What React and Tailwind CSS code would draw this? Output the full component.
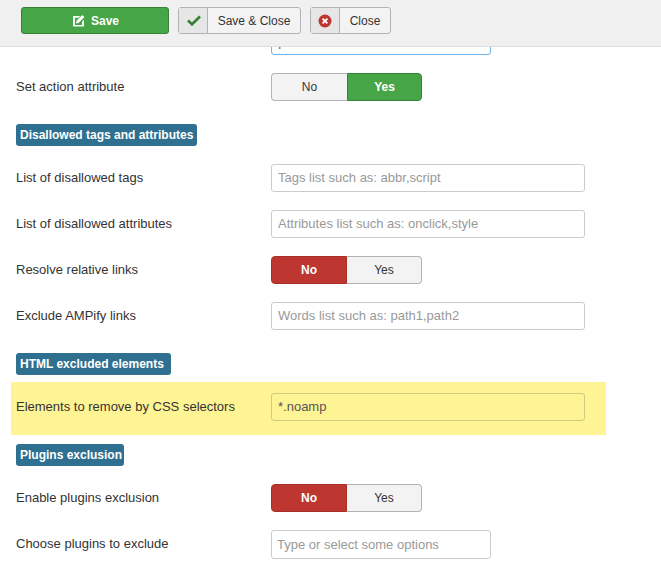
const font = "font-['Liberation_Sans',Arial,sans-serif]";

function Toggle({ value }) {
  const no = value === "no";
  return (
    <div className="flex h-[28px] w-[151px] text-[12px]">
      <div className={`flex w-[76px] items-center justify-center rounded-l-[4px] border ${no ? "border-[#a9302a] bg-[#bd362f] font-bold text-white" : "border-[#b3b3b3] border-r-0 bg-[#f3f3f3] text-[#333]"}`}>No</div>
      <div className={`flex w-[75px] items-center justify-center rounded-r-[4px] border ${no ? "border-[#b3b3b3] border-l-0 bg-[#f3f3f3] text-[#333]" : "border-[#378137] bg-[#46a546] font-bold text-white"}`}>Yes</div>
    </div>
  );
}

function TextBox({ placeholder, value, wide = true, tall, tint }) {
  return (
    <input
      readOnly
      value={value || ""}
      placeholder={placeholder}
      className={`${wide ? "w-[314px]" : "w-[220px]"} ${tall ? "h-[29px] pl-[5px] pr-[6px]" : "h-[28px] px-[6px]"} rounded-[3px] border ${tint ? "border-[#d1c97f] bg-[#fff494] text-[#555]" : "border-[#ccc] bg-white"} pb-[1px] text-[13px] outline-none placeholder:text-[#999]`}
    />
  );
}

function Row({ label, children, className = "mt-[18px]", labelClass = "" }) {
  return (
    <div className={`flex items-center ${className}`}>
      <div className={`w-[255px] text-[13px] text-[#333] ${labelClass}`}>{label}</div>
      {children}
    </div>
  );
}

function Badge({ children, className }) {
  return (
    <div className={`flex h-[22px] items-center whitespace-nowrap rounded-[3px] bg-[#2f6f8f] px-[4px] text-[12px] font-bold text-white ${className}`}>
      {children}
    </div>
  );
}

function ActionButton({ icon, label, width }) {
  return (
    <div className={`flex h-[27px] ${width} rounded-[3px] border border-[#b3b3b3] bg-[#f3f3f3] text-[12px] text-[#333]`}>
      <div className="flex w-[29px] items-center justify-center border-r border-[#b3b3b3] bg-[#e6e6e6]">{icon}</div>
      <div className="flex flex-1 items-center justify-center">{label}</div>
    </div>
  );
}

export default function App() {
  return (
    <div className={`h-[579px] w-[661px] overflow-hidden bg-white ${font}`}>
      <div className="relative z-10 flex h-[47px] items-start gap-[9px] border-b border-[#dedede] bg-[#f0f0f0] pl-[21px] pt-[7px]">
        <div className="flex h-[27px] w-[148px] items-center justify-center gap-[6px] rounded-[3px] border border-[#378137] bg-[#46a546] pl-[1px] text-[12px] font-bold text-white">
          <svg width="13" height="13" viewBox="0 0 13 13">
            <path d="M1.5 2h6.7L6.5 3.8H2.9v7.3h7.2V7.6L12 5.8v6a.7.7 0 0 1-.7.7H1.7a.7.7 0 0 1-.7-.7V2.7A.7.7 0 0 1 1.5 2z" fill="#fff" />
            <path d="M4.6 6.8 10.2.9l2.2 2.2-5.8 5.9-2.6.5z" fill="#fff" />
          </svg>
          Save
        </div>
        <ActionButton
          width="w-[123px]"
          label="Save & Close"
          icon={
            <svg width="14" height="11" viewBox="0 0 14 11" className="ml-[1px]">
              <path d="M1 5.5 5 9.2 13 1.6" fill="none" stroke="#378137" strokeWidth="2.8" />
            </svg>
          }
        />
        <ActionButton
          width="w-[81px]"
          label="Close"
          icon={
            <svg width="14" height="14" viewBox="0 0 14 14">
              <circle cx="7" cy="7" r="6.5" fill="#bd362f" />
              <path d="M4.6 4.6l4.8 4.8M9.4 4.6l-4.8 4.8" stroke="#fff" strokeWidth="1.9" />
            </svg>
          }
        />
      </div>

      <div className="pl-[16px]">
        <input
          readOnly
          value="|"
          className="-mt-[20px] ml-[255px] block h-[28px] w-[220px] rounded-[3px] border border-[#6cb4ee] bg-white px-[6px] text-[13px] text-[#555] outline-none"
        />
        <Row label="Set action attribute"><Toggle value="yes" /></Row>
        <Badge className="mt-[23px] w-[181px]">Disallowed tags and attributes</Badge>
        <Row label="List of disallowed tags"><TextBox placeholder="Tags list such as: abbr,script" /></Row>
        <Row label="List of disallowed attributes"><TextBox placeholder="Attributes list such as: onclick,style" /></Row>
        <Row label="Resolve relative links"><Toggle value="no" /></Row>
        <Row label="Exclude AMPify links"><TextBox placeholder="Words list such as: path1,path2" /></Row>
        <Badge className="mt-[23px] w-[155px]">HTML excluded elements</Badge>
        <div className="-ml-[5px] mt-[7px] flex h-[53px] w-[595px] items-start bg-[#fff494] pl-[5px] pt-[11px]">
          <Row label="Elements to remove by CSS selectors" className="mt-0"><TextBox value="*.noamp" tint /></Row>
        </div>
        <Badge className="mt-[9px] w-[108px]">Plugins exclusion</Badge>
        <Row label="Enable plugins exclusion"><Toggle value="no" /></Row>
        <Row label="Choose plugins to exclude" labelClass="pb-[2px]"><TextBox placeholder="Type or select some options" wide={false} tall /></Row>
      </div>
    </div>
  );
}
